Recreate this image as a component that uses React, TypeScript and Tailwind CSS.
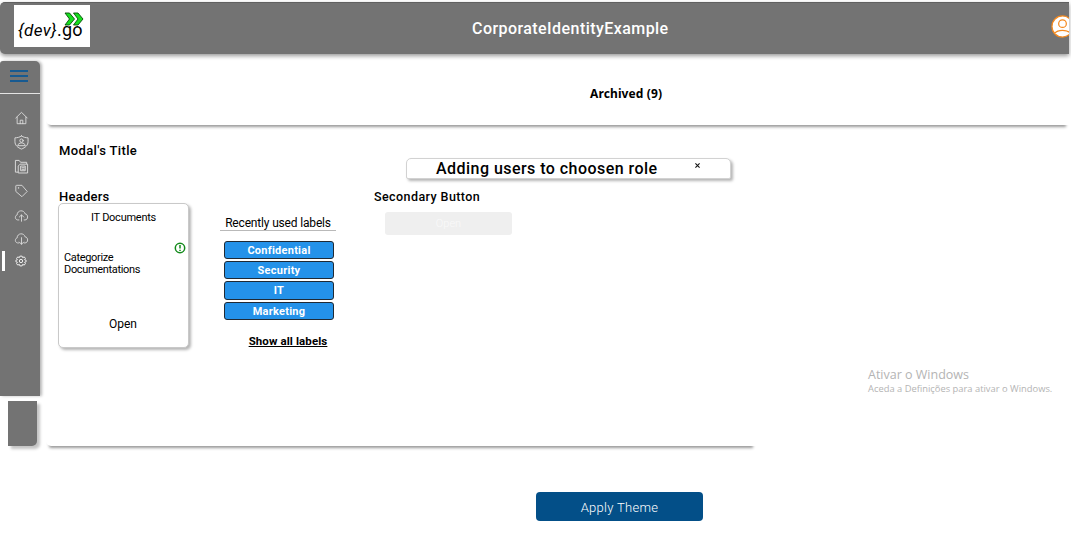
import React from "react";

const labels = ["Confidential", "Security", "IT", "Marketing"];

function Icon({ children, className = "h-[14px]" }: { children: React.ReactNode; className?: string }) {
  return (
    <svg
      viewBox="0 0 16 16"
      className={`w-[15px] ${className}`}
      fill="none"
      stroke="#dedede"
      strokeWidth="1"
      strokeLinecap="round"
      strokeLinejoin="round"
    >
      {children}
    </svg>
  );
}

function Logo() {
  return (
    <div className="relative flex h-[42px] w-[76px] items-center bg-white pl-[4px] pt-[7px] font-['Roboto'] text-[17px] leading-[20px] text-black">
      <span className="whitespace-nowrap">
        <span className="text-[17px] italic tracking-[0.4px]">{"{dev}"}</span>
        <span className="text-[18px] tracking-[0.1px]">.go</span>
      </span>
      <svg className="absolute left-[50px] top-[7px] h-[14px] w-[20px]" viewBox="0 0 20 14" fill="#16e01f" stroke="#064c08" strokeWidth="0.9">
        <path d="M1 1h4.500l5 6-5 6H1l4.500-6z" />
        <path d="M9.500 1H14l5 6-5 6H9.500l4.500-6z" />
      </svg>
    </div>
  );
}

function Sidebar() {
  return (
    <div className="flex w-[46px] shrink-0 flex-col items-start">
      <nav className="flex h-[335px] w-[40px] flex-col rounded-tr-[5px] rounded-tl-[3px] bg-[#737373] shadow-[2px_0_3px_#b8b8b8]">
        <div className="flex h-[33px] shrink-0 items-start border-b border-[#e4e4e4] pl-[10px] pt-[9px]">
          <div className="flex w-[18px] flex-col gap-[3px]">
            <i className="h-[2px] bg-[#175a91]" />
            <i className="h-[2px] bg-[#175a91]" />
            <i className="h-[2px] bg-[#175a91]" />
          </div>
        </div>
        <div className="flex flex-col items-center pl-[2px] pt-[17px]">
          <Icon>
            <path d="M1.500 8 8 1.500 14.500 8M3 7v7.500h10V7M6.500 14.500v-4h3v4" />
          </Icon>
          <Icon className="mt-[10px] h-[15px]">
            <path d="M8 1C6 2.500 3.500 3 1 3v4c0 4 3 6.500 7 8 4-1.500 7-4 7-8V3c-2.500 0-5-.500-7-2zM4 11c.5-3.500 7.500-3.500 8 0z" />
            <circle cx="8" cy="6" r="1.800" />
          </Icon>
          <Icon className="mt-[9px] h-[15px]">
            <path d="M4 14H1.500V1.500h4L7 3.500h6.500V5M4.500 14.500v-7l2-2h8v9zM7.500 7.500H12v5H7.500zM8.500 9.300h2.500M8.500 11h2.500" />
          </Icon>
          <Icon className="mt-[10px] h-[14px]">
            <path d="M2.500 1.500h6l6 7-6 6-7-6v-6z" />
            <circle cx="4.500" cy="4.500" r=".2" />
          </Icon>
          <Icon className="mt-[11px] h-[14px]">
            <path d="M5 12.500H3.500C.3 12 .2 7.500 3 6.800 3 1 11 .5 12 5.500c4 .3 4 7 0 7h-1M8 14V7M5.500 9.200 8 6.700l2.500 2.500" />
          </Icon>
          <Icon className="mt-[9px] h-[14px]">
            <path d="M5 12.500H3.500C.3 12 .2 7.500 3 6.800 3 1 11 .5 12 5.500c4 .3 4 7 0 7h-1M8 6.500V14M5.500 11.500 8 14l2.500-2.500" />
          </Icon>
        </div>
        <div className="mt-[5px] flex h-[20px] items-center pl-[2px]">
          <i className="h-[20px] w-[3px] bg-white" />
          <svg viewBox="0 0 16 16" className="ml-[10px] h-[12px] w-[12px]" fill="none" stroke="#f1f1f1" strokeWidth="1.300" strokeLinejoin="round">
            <path d="M6.500 1.500h3l.6 1.900 2.300-.8 1.500 2.100L12.800 6.300l2 .7v2l-2 .7 1.100 1.600-1.500 2.100-2.300-.8-.6 1.900h-3l-.6-1.900-2.300.8-1.500-2.100 1.100-1.600-2-.7V7l2-.7-1.100-1.600 1.500-2.100 2.300.8z" />
            <circle cx="8" cy="8" r="2.200" />
          </svg>
        </div>
      </nav>
      <div className="ml-[8px] mt-[5px] h-[45px] w-[29px] rounded-br-[5px] bg-[#737373] shadow-[3px_3px_3px_#c4c4c4]" />
    </div>
  );
}

function DocumentCard() {
  return (
    <div className="flex h-[145px] w-[131px] flex-col rounded-[5px] border border-[#c9c9c9] bg-white font-['Roboto'] text-[11px] text-black shadow-[2px_2px_3px_#b5b5b5]">
      <div className="pt-[7px] text-center leading-[14px] tracking-[-0.25px]">IT Documents</div>
      <div className="flex h-[12px] justify-end pr-[2px] pt-[17px]">
        <svg viewBox="0 0 12 12" className="h-[12px] w-[12px] shrink-0" fill="none" stroke="#138a1b" strokeWidth="1.500">
          <circle cx="6" cy="6" r="4.700" />
          <path d="M6 3v3.500M6 7.700v1.300" />
        </svg>
      </div>
      <div className="pl-[5px] pt-[10px] leading-[12px] tracking-[-0.33px]">
        Categorize
        <br />
        Documentations
      </div>
      <div className="pt-[40px] text-center text-[12px] leading-[16px]">
        <span className="-ml-[1px]">Open</span>
      </div>
    </div>
  );
}

function LabelList() {
  return (
    <div className="ml-[31px] mt-[91px] flex w-[116px] flex-col items-center">
      <div className="h-[15px] w-full whitespace-nowrap border-b border-[#b9b9b9] text-center text-[12px] leading-[15px] tracking-[-0.17px]">
        Recently used labels
      </div>
      <ul className="ml-[2px] mt-[10px] flex w-[110px] flex-col gap-[2px]">
        {labels.map((label) => (
          <li
            key={label}
            className="h-[18.200px] rounded-[3px] border border-[#202a34] bg-[#2492e9] text-center text-[11px] font-bold leading-[17.500px] tracking-[0.250px] text-white"
          >
            {label}
          </li>
        ))}
      </ul>
      <a className="ml-[20px] mt-[13px] text-[11.500px] font-bold leading-[16px] tracking-[0.100px] underline">Show all labels</a>
    </div>
  );
}

export default function App() {
  return (
    <div className="relative flex h-[533px] w-[1071px] flex-col overflow-hidden bg-white font-['Roboto',sans-serif] text-black">
      <header className="mt-[2px] flex h-[52px] w-[1069px] shrink-0 rounded-l-[5px] border-t border-[#606060] bg-[#737373] shadow-[0_2px_4px_#999]">
        <div className="w-[472px] pl-[14px] pt-[2px]">
          <Logo />
        </div>
        <h1 className="w-[579px] pt-[16px] text-[16px] font-medium leading-[20px] tracking-[0.440px] text-white">CorporateIdentityExample</h1>
        <div className="w-[18px] overflow-hidden pt-[12px]">
          <svg viewBox="0 0 24 24" className="h-[23px] w-[23px]" fill="white" stroke="#f58a1f" strokeWidth="1.300">
            <circle cx="12" cy="12" r="11" />
            <circle cx="12" cy="9" r="4" />
            <path d="M4 19c3-4 13-4 16 0" />
          </svg>
        </div>
      </header>

      <div className="flex pt-[7px]">
        <Sidebar />
        <main className="flex flex-col">
          <section className="flex h-[64px] w-[1023px] items-center rounded-bl-[5px] pl-[544px] pt-[1px] shadow-[0_5px_3px_-3px_#999]">
            <h2 className="font-['Noto_Sans'] text-[12px] font-bold leading-[16px] tracking-[0.120px]">Archived (9)</h2>
          </section>
          <section className="flex h-[321px] w-[710px] items-start rounded-bl-[5px] pl-[12px] shadow-[0_5px_3px_-3px_#999]">
            <div className="w-[131px] text-[13px] font-medium leading-[18px] tracking-[0.360px]">
              <h3 className="pl-px pt-[17px]">Modal's Title</h3>
              <h3 className="pl-px pt-[28px] tracking-[0.250px]">Headers</h3>
              <div className="-mt-[3px] font-normal tracking-normal">
                <DocumentCard />
              </div>
            </div>
            <LabelList />
            <div className="ml-[38px] pt-[33px]">
              <div className="ml-[32px] flex h-[21px] w-[325px] items-start rounded-t-[5px] rounded-b-[2px] border border-[#d2d2d2] bg-white pl-[29px] shadow-[2px_2px_3px_#b5b5b5]">
                <span className="w-[259px] text-[16px] font-medium leading-[20px] tracking-[0.460px]">Adding users to choosen role</span>
                <svg viewBox="0 0 6 6" className="mt-[4px] h-[5px] w-[5px]" stroke="#111" strokeWidth="1.300">
                  <path d="m.5.5 5 5M5.500.5l-5 5" />
                </svg>
              </div>
              <h3 className="pt-[9px] text-[12.500px] font-medium leading-[18px] tracking-[0.420px]">Secondary Button</h3>
              <button className="ml-[11px] mt-[6px] block h-[23px] w-[127px] rounded-[3px] bg-[#efefef] pt-[2px] text-[11px] font-light text-[#fafafa]">Open</button>
            </div>
          </section>
        </main>
      </div>

      <div className="pl-[536px] pt-[46px]">
        <button className="block h-[29px] w-[167px] rounded-[4px] bg-[#034f88] pt-[2px] text-[13px] font-light tracking-[0.300px] text-white">Apply Theme</button>
      </div>

      <aside className="absolute left-[868px] top-[367px] whitespace-nowrap font-['Open_Sans'] text-[#b4b4b4]">
        <p className="text-[12.500px] leading-[16px]">Ativar o Windows</p>
        <p className="text-[9.370px] leading-[12px]">Aceda a Definições para ativar o Windows.</p>
      </aside>
    </div>
  );
}
